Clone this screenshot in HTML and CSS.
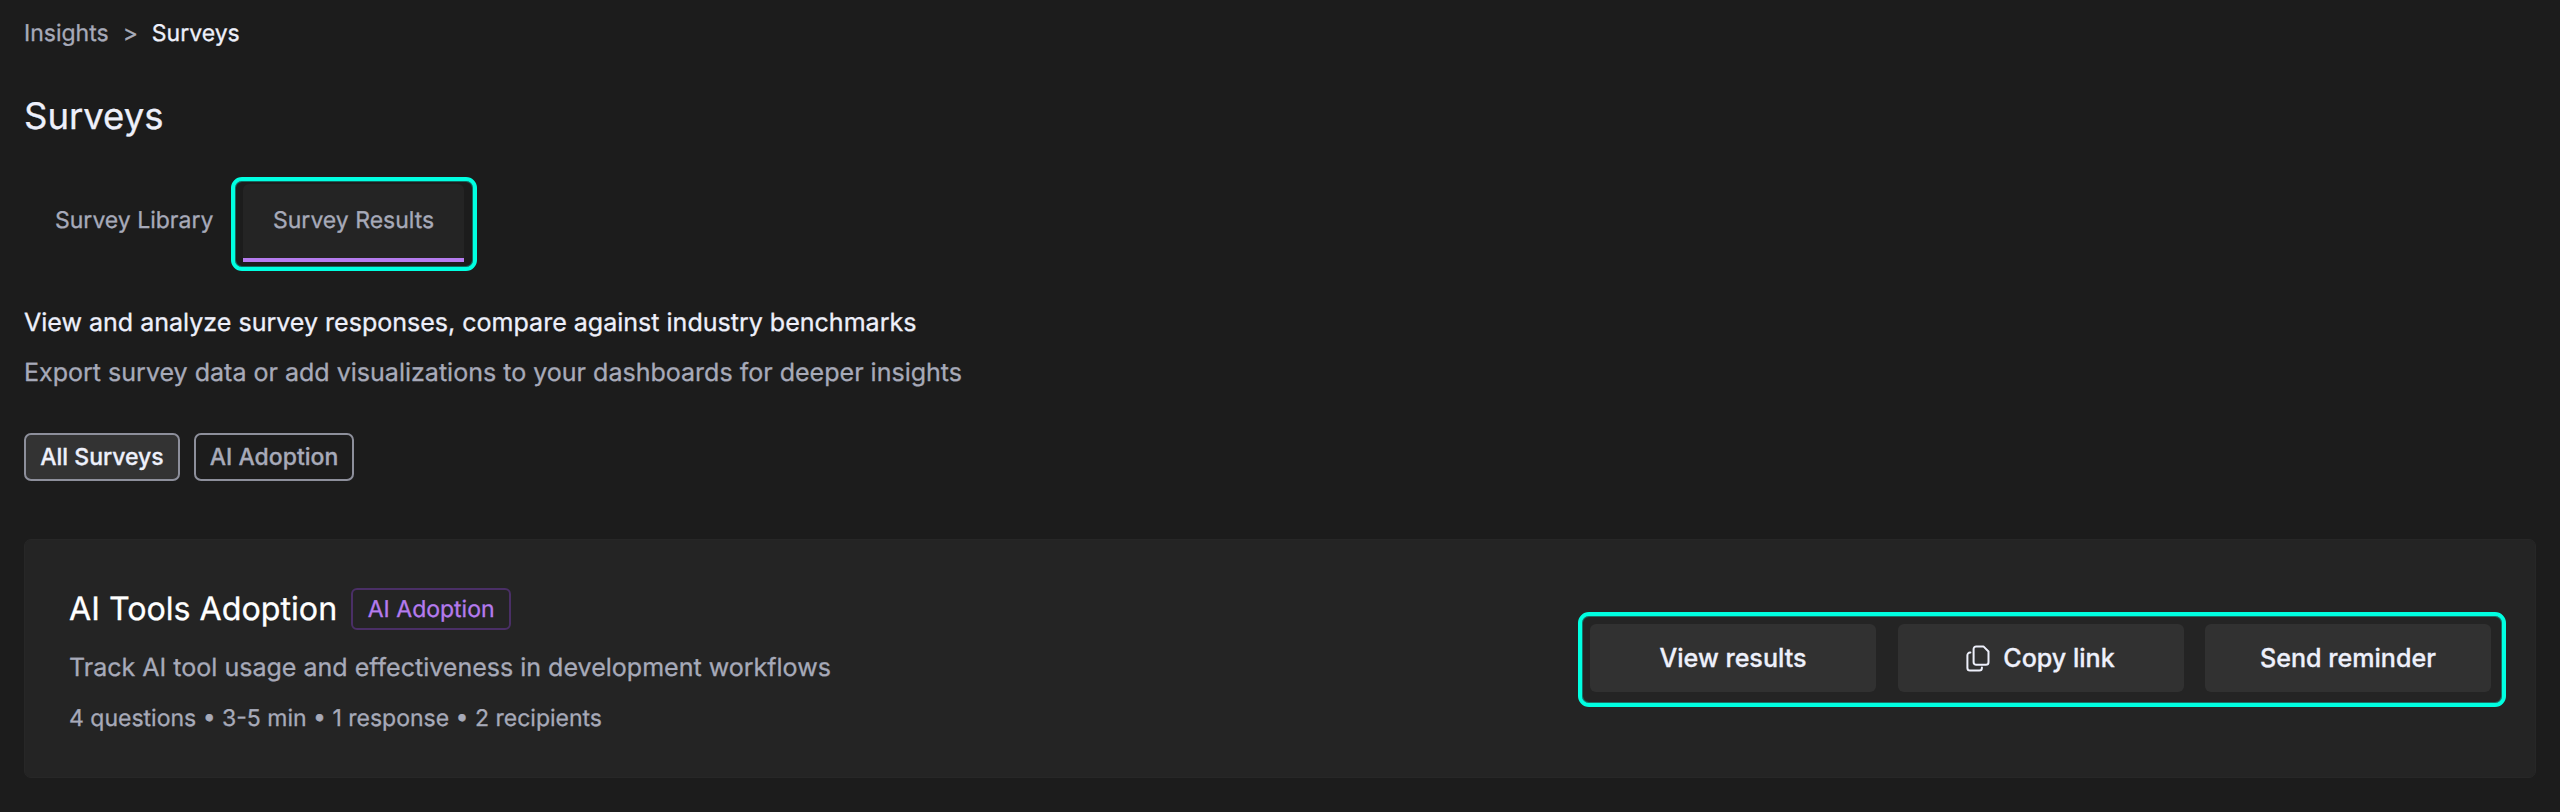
FILE: index.html
```html
<!DOCTYPE html>
<html lang="en">
<head>
<meta charset="utf-8">
<title>Surveys</title>
<link rel="stylesheet" href="styles.css">
</head>
<body>
<main class="page">
  <nav class="breadcrumb">
    <a class="crumb">Insights</a><span class="crumb-sep">&gt;</span><span class="crumb crumb-current">Surveys</span>
  </nav>
  <h1 class="title">Surveys</h1>
  <div class="tabs">
    <div class="tab">Survey Library</div>
    <div class="highlight tab-highlight"><div class="tab tab-active">Survey Results</div></div>
  </div>
  <section class="intro">
    <p class="intro-lead">View and analyze survey responses, compare against industry benchmarks</p>
    <p class="intro-sub">Export survey data or add visualizations to your dashboards for deeper insights</p>
  </section>
  <div class="filters">
    <button class="chip chip-all">All Surveys</button>
    <button class="chip">AI Adoption</button>
  </div>
  <article class="card">
    <div class="card-info">
      <div class="card-head">
        <h2 class="card-title">AI Tools Adoption</h2>
        <span class="badge">AI Adoption</span>
      </div>
      <p class="card-desc">Track AI tool usage and effectiveness in development workflows</p>
      <p class="card-meta">4 questions • 3-5 min • 1 response • 2 recipients</p>
    </div>
    <div class="highlight actions">
      <button class="btn">View results</button>
      <button class="btn">
        <svg class="icon" viewBox="0 0 24 27" fill="none" stroke="currentColor" stroke-width="2" stroke-linejoin="round" stroke-linecap="round">
          <path d="M10.2 1.4h7.2l5.1 5.1v10.700a2.600 2.600 0 0 1-2.600 2.600h-9.700a2.600 2.600 0 0 1-2.600-2.600V4a2.600 2.600 0 0 1 2.600-2.600z"/>
          <path d="M4.400 7.600H4A2.600 2.600 0 0 0 1.400 10.200v12.800a2.600 2.600 0 0 0 2.600 2.600h9.300a2.600 2.600 0 0 0 2.600-2.600v-.4"/>
        </svg>
        Copy link
      </button>
      <button class="btn">Send reminder</button>
    </div>
  </article>
</main>
</body>
</html>
```
FILE: styles.css
```css
* { box-sizing: border-box; }

body {
  margin: 0;
  background: #1c1c1c;
  color: #eef0fb;
  font-family: "Inter", sans-serif;
  font-size: 23px;
  text-rendering: geometricPrecision;
  -webkit-text-stroke: 0.3px currentColor;
  overflow: hidden;
}

h1, h2, p { margin: 0; font-weight: 400; }

button {
  font: inherit;
  color: inherit;
  padding: 0;
}

.page {
  height: 812px;
  padding: 17px 24px 0;
}

.breadcrumb {
  display: flex;
  height: 32px;
  line-height: 32px;
}
.crumb { color: #a7aab9; }
.crumb-sep { color: #a7aab9; margin: 0 14px; }
.crumb-current { color: #eef0fb; }

.title {
  margin-top: 43px;
  font-size: 36.5px;
  line-height: 48px;
}

.tabs {
  display: flex;
  align-items: flex-start;
  margin-top: 37px;
}
.tab {
  height: 78px;
  padding: 0 30px;
  color: #a7aab9;
  line-height: 73px;
  white-space: nowrap;
}
.tabs > .tab {
  width: 207px;
  margin-top: 7px;
  padding: 0 0 0 31px;
}
.tab-active {
  width: 221px;
  background: #242424;
  border-bottom: 4px solid #b57bee;
  border-radius: 6px 6px 0 0;
}

.highlight {
  border: 4px solid #00ffe1;
  border-radius: 11px;
  box-shadow: inset 0 0 0 1px rgba(0, 255, 225, 0.35);
}
.tab-highlight {
  width: 246px;
  height: 94px;
  padding: 3px 8px;
}

.intro { margin-top: 32px; font-size: 25.04px; }
.intro-lead { line-height: 41px; }
.intro-sub { margin-top: 9px; line-height: 40px; color: #a7aab9; }

.filters {
  display: flex;
  gap: 14px;
  margin-top: 40px;
}
.chip {
  width: 160px;
  height: 48px;
  border: 2px solid #8d8f9b;
  border-radius: 7px;
  background: transparent;
  color: #a7aab9;
  font-weight: 500;
}
.chip-all {
  width: 156px;
  background: #333;
  color: #eef0fb;
}

.card {
  display: flex;
  align-items: flex-start;
  justify-content: space-between;
  height: 239px;
  margin-top: 58px;
  padding: 48px 29px 0 44px;
  border: 1px solid #272727;
  border-radius: 7px;
  background: #242424;
}
.card-head {
  display: flex;
  align-items: center;
  gap: 14px;
}
.card-title {
  color: #fff;
  font-size: 32.2px;
  line-height: 42px;
}
.badge {
  width: 160px;
  height: 42px;
  border: 2px solid #4a2f66;
  border-radius: 6px;
  color: #b57bee;
  line-height: 38px;
  text-align: center;
}
.card-desc {
  margin-top: 18px;
  color: #a7aab9;
  font-size: 25.04px;
  line-height: 40px;
}
.card-meta {
  margin-top: 12px;
  color: #a7aab9;
  line-height: 36px;
}

.actions {
  display: flex;
  gap: 21.5px;
  width: 928px;
  height: 95px;
  margin-top: 24px;
  padding: 8px;
}
.btn {
  display: flex;
  align-items: center;
  justify-content: center;
  gap: 13px;
  width: 286px;
  height: 68px;
  border: 0;
  border-radius: 6px;
  background: #313131;
  font-size: 25.1px;
  font-weight: 500;
}
.icon {
  width: 24px;
  height: 27px;
}
```
